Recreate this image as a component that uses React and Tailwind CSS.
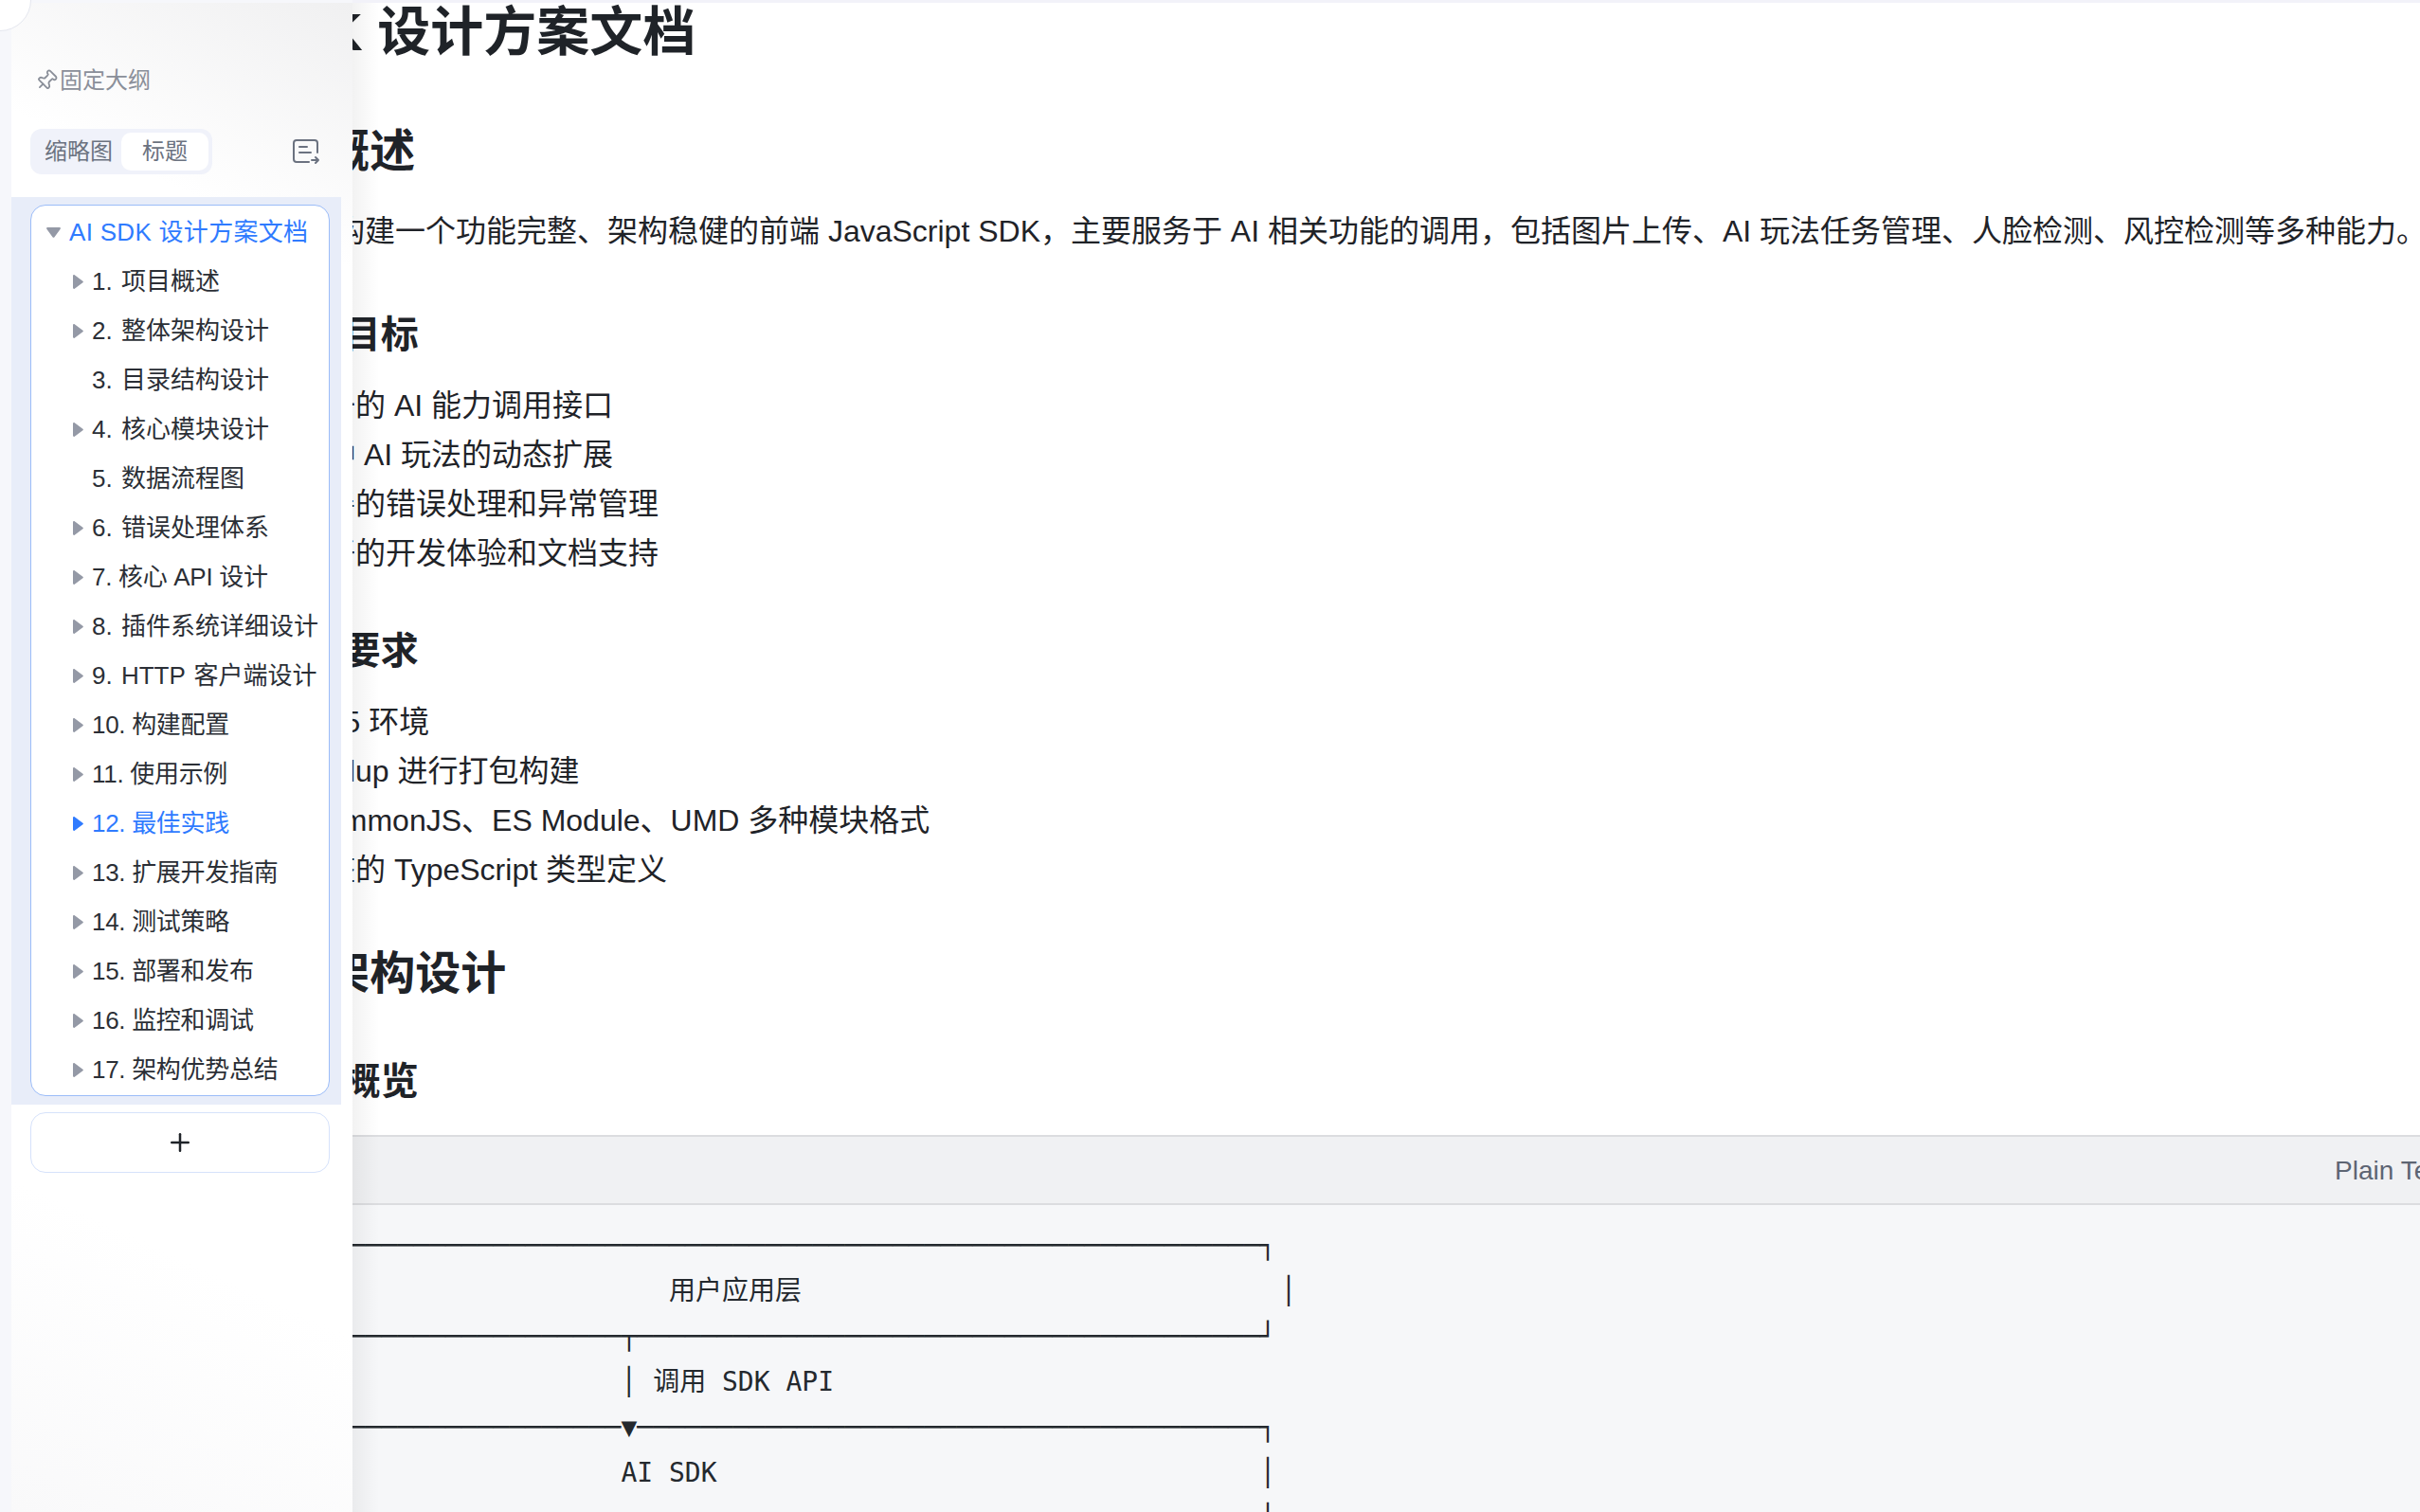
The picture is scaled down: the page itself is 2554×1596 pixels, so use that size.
import React from 'react';
import { Pin, Plus } from 'lucide-react';

const sans = { fontFamily: '"Liberation Sans", "Noto Sans CJK SC", sans-serif' };

const outline = [
  { label: '1. 项目概述', caret: true },
  { label: '2. 整体架构设计', caret: true },
  { label: '3. 目录结构设计', caret: false },
  { label: '4. 核心模块设计', caret: true },
  { label: '5. 数据流程图', caret: false },
  { label: '6. 错误处理体系', caret: true },
  { label: '7. 核心 API 设计', caret: true, tight: true },
  { label: '8. 插件系统详细设计', caret: true },
  { label: '9. HTTP 客户端设计', caret: true },
  { label: '10. 构建配置', caret: true, tight: true },
  { label: '11. 使用示例', caret: true, tight: true },
  { label: '12. 最佳实践', caret: true, active: true, tight: true },
  { label: '13. 扩展开发指南', caret: true, tight: true },
  { label: '14. 测试策略', caret: true, tight: true },
  { label: '15. 部署和发布', caret: true, tight: true },
  { label: '16. 监控和调试', caret: true, tight: true },
  { label: '17. 架构优势总结', caret: true, tight: true },
];

const dash = (n) => '─'.repeat(n);
const gap = (n) => ' '.repeat(n);

const codeLines = [
  '┌' + dash(64) + '┐',
  '│' + gap(27) + '用户应用层' + gap(30) + '│',
  '└' + dash(24) + '┬' + dash(39) + '┘',
  gap(25) + '│ 调用 SDK API',
  '┌' + dash(24) + '▼' + dash(39) + '┐',
  '│' + gap(24) + 'AI SDK' + gap(34) + '│',
  '├' + dash(64) + '┤',
];

function CaretDown() {
  return (
    <svg width="15" height="11" viewBox="0 0 15 11" className="shrink-0 text-[#9499a6]" fill="currentColor">
      <path d="M1.200 0h12.600c.9 0 1.400 1 .9 1.700L8.300 10.400c-.4.6-1.200.6-1.600 0L.3 1.700C-.2 1 .3 0 1.200 0z" />
    </svg>
  );
}

function CaretRight({ className }) {
  return (
    <svg width="11" height="15" viewBox="0 0 11 15" className={className} fill="currentColor">
      <path d="M0 1.200v12.600c0 .9 1 1.400 1.700.9l8.700-6.400c.6-.4.6-1.200 0-1.600L1.700.3C1 -.2 0 .3 0 1.200z" />
    </svg>
  );
}

function OutlineIcon() {
  return (
    <svg width="30" height="28" viewBox="0 0 30 28" fill="none" stroke="#6b7280" strokeWidth="2" strokeLinecap="round" strokeLinejoin="round">
      <path d="M27 15V5a3 3 0 0 0-3-3H5a3 3 0 0 0-3 3v17a3 3 0 0 0 3 3h13" />
      <path d="M8 9h8M8 15h12M21 23h7M25 20l3 3-3 3" />
    </svg>
  );
}

function Sidebar() {
  return (
    <aside className="relative w-[372px] h-full shrink-0 pl-[12px] pt-[3px] bg-[#f6f7fb]">
      <div className="absolute -left-[33px] -top-[33px] w-[66px] h-[66px] rounded-full bg-white border border-[#e5e7ef]"></div>
      <div className="h-full bg-[linear-gradient(205deg,#f0f0f1_0%,#ffffff_16%,#ffffff_80%,#f9f9fa_100%)]">
        <div className="h-[205px]">
          <div className="flex items-center pl-[25px] pt-[67px] h-[96px] text-[24px] leading-[28px] text-[#8a8f99]">
            <Pin size={24} strokeWidth={1.8} className="rotate-45 shrink-0 -mr-[2px]" />
            <span className="ml-[4px]">固定大纲</span>
          </div>
          <div className="flex items-center justify-between pl-[20px] pr-[34px] mt-[37px]">
            <div className="flex items-center w-[192px] h-[48px] rounded-[12px] bg-[#f0f2fa] text-[24px] text-[#6b7280] pl-[15px] pr-[4px]">
              <span className="w-[81px]">缩略图</span>
              <span className="w-[92px] h-[40px] leading-[40px] text-center rounded-[10px] bg-white">标题</span>
            </div>
            <OutlineIcon />
          </div>
        </div>
        <div className="w-[348px] h-[958px] bg-[#e8edf9] pl-[20px] pr-[12px] pt-[8px]">
          <div className="h-[941px] rounded-[16px] border border-[#9bbcf8] bg-white">
            <div className="flex items-center h-[52px] mt-[2px] pl-[16px] text-[26px] tracking-[0.3px] text-[#2f7bff]">
              <CaretDown />
              <span className="ml-[9px] whitespace-nowrap">AI SDK 设计方案文档</span>
            </div>
            <ul>
              {outline.map((item) => (
                <li key={item.label} className={`flex items-center h-[52px] pl-[44px] text-[26px] whitespace-nowrap ${item.tight ? 'tracking-[-0.3px]' : '[word-spacing:2px]'} ${item.active ? 'text-[#2f7bff]' : 'text-[#2b2f36]'}`}>
                  <span className="w-[20px] shrink-0">
                    {item.caret && <CaretRight className={item.active ? 'text-[#2f7bff]' : 'text-[#9499a6]'} />}
                  </span>
                  <span>{item.label}</span>
                </li>
              ))}
            </ul>
          </div>
        </div>
        <div className="w-[316px] h-[64px] ml-[20px] mt-[8px] flex items-center justify-center rounded-[16px] border border-[#d6e2fb] bg-white text-[#1f2328]">
          <Plus size={30} strokeWidth={2} />
        </div>
      </div>
    </aside>
  );
}

function Document() {
  return (
    <main className="relative flex-1 min-w-0 h-full overflow-hidden bg-white border-t-[3px] border-[#f2f2f9]">
      <div className="absolute left-0 top-0 bottom-0 w-[28px] bg-gradient-to-r from-black/5 to-transparent z-10"></div>
      <div className="w-[2424px] -ml-[179px] text-[#1f2328]">
        <h1 className="pt-[3px] text-[56px] leading-[56px] font-bold whitespace-nowrap">AI SDK 设计方案文档</h1>
        <h2 className="mt-[66px] text-[48px] leading-[64px] font-bold whitespace-nowrap">1. 项目概述</h2>
        <p className="mt-[26px] text-[32px] leading-[52px] whitespace-nowrap">本项目旨在构建一个功能完整、架构稳健的前端 JavaScript SDK，主要服务于 AI 相关功能的调用，包括图片上传、AI 玩法任务管理、人脸检测、风控检测等多种能力。</p>
        <h3 className="mt-[55px] ml-[22px] text-[40px] leading-[56px] font-bold whitespace-nowrap">1.2 核心目标</h3>
        <ul className="mt-[21px] pl-[54px] list-disc text-[32px] leading-[52px]">
          <li>提供统一的 AI 能力调用接口</li>
          <li>支持多种 AI 玩法的动态扩展</li>
          <li>提供完善的错误处理和异常管理</li>
          <li>提供良好的开发体验和文档支持</li>
        </ul>
        <h3 className="mt-[49px] ml-[22px] text-[40px] leading-[56px] font-bold whitespace-nowrap">1.3 技术要求</h3>
        <ul className="mt-[21px] pl-[54px] list-disc text-[32px] leading-[52px]">
          <li>支持 ES5 环境</li>
          <li>使用 Rollup 进行打包构建</li>
          <li>支持 CommonJS、ES Module、UMD 多种模块格式</li>
          <li>提供完整的 TypeScript 类型定义</li>
        </ul>
        <h2 className="mt-[52px] text-[48px] leading-[64px] font-bold whitespace-nowrap">2. 整体架构设计</h2>
        <h3 className="mt-[53px] ml-[22px] text-[40px] leading-[56px] font-bold whitespace-nowrap">2.1 架构概览</h3>
        <div className="mt-[29px] border-t-2 border-[#dcdde0] bg-[#f6f7f9]">
          <div className="flex items-center justify-end h-[72px] pt-[2px] pr-[32px] border-b-2 border-[#dcdde0] bg-[#f0f1f3] text-[28px] text-[#5d6573]">Plain Text</div>
          <pre className="pt-[19px] pl-[41px] text-[28px] leading-[48px] text-[#24292e] font-['DejaVu_Sans_Mono','Noto_Sans_CJK_SC',monospace]">
            {codeLines.join('\n')}
          </pre>
        </div>
      </div>
    </main>
  );
}

export default function App() {
  return (
    <div className="flex w-[2554px] h-[1596px] overflow-hidden bg-white" style={sans}>
      <Sidebar />
      <Document />
    </div>
  );
}
